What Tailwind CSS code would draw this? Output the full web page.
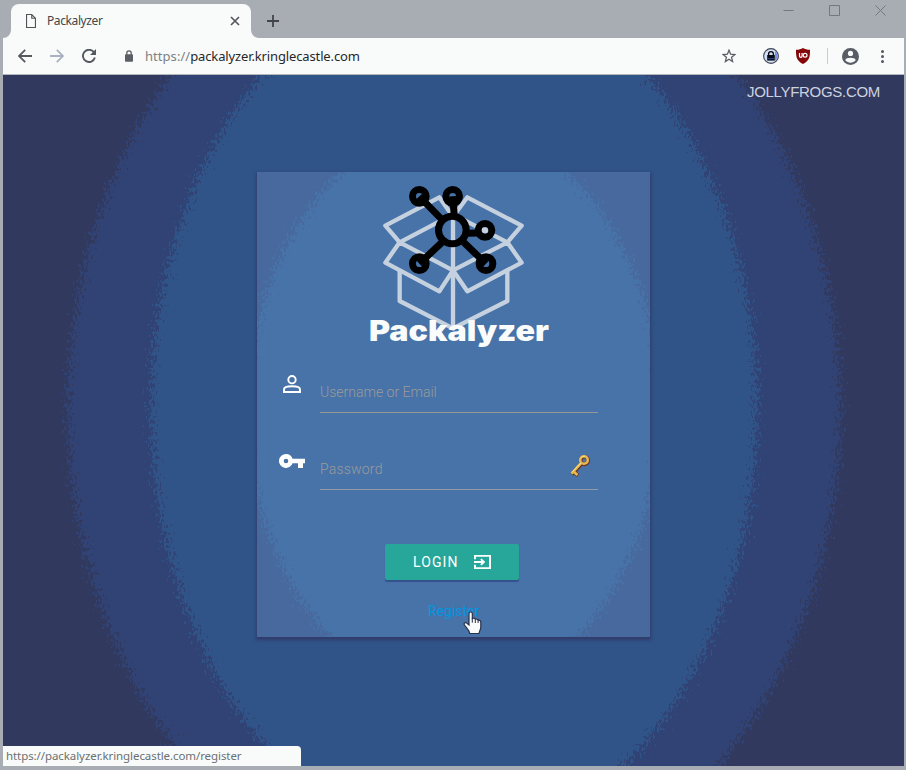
<!DOCTYPE html>
<html lang="en">
<head>
<meta charset="utf-8">
<title>Packalyzer</title>
<script src="https://cdn.jsdelivr.net/npm/@tailwindcss/browser@4"></script>
</head>
<body class="overflow-hidden">
<div class="flex h-[770px] w-[906px] flex-col bg-[#a8acb3] pr-[2px] pb-1 pl-[3px] font-['Noto_Sans',sans-serif]">
  <!-- Tab strip -->
  <header class="flex h-[38px] items-start">
    <div class="relative mt-1 ml-2 flex h-[34px] w-60 items-center rounded-t-lg bg-[#f9fbfa] pr-[10px] pl-[15px]">
      <svg class="absolute bottom-0 -left-2 size-2" viewBox="0 0 8 8"><path d="M8 0v8H0a8 8 0 0 0 8-8z" fill="#f9fbfa"/></svg>
      <svg class="absolute -right-2 bottom-0 size-2" viewBox="0 0 8 8"><path d="M0 0v8h8a8 8 0 0 1-8-8z" fill="#f9fbfa"/></svg>
      <svg class="h-[14px] w-[10px]" viewBox="0 0 10 14" fill="none" stroke="#4f5358" stroke-width="1.1"><path d="M.55.55h5.2l3.7 3.7v9.2H.55zM5.75.55v3.7h3.7"/></svg>
      <span class="ml-[11px] text-xs tracking-[-0.4px] text-[#41464b]">Packalyzer</span>
      <svg class="ml-auto size-3" viewBox="0 0 12 12" stroke="#54585d" stroke-width="1.7"><path d="M2 2l8 8M10 2l-8 8"/></svg>
    </div>
    <svg class="mt-[15px] ml-4 size-3" viewBox="0 0 12 12" stroke="#41454b" stroke-width="1.8"><path d="M6 0v12M0 6h12"/></svg>
    <div class="ml-auto flex items-center gap-[35px] pt-1 pr-[18px]">
      <svg class="h-3 w-[11px]" viewBox="0 0 11 12" stroke="#74777c"><path d="M.5 6.5h10"/></svg>
      <svg class="size-[11px]" viewBox="0 0 11 11" fill="none" stroke="#74777c"><path d="M.5.5h10v10H.5z"/></svg>
      <svg class="size-[11px]" viewBox="0 0 11 11" stroke="#74777c"><path d="M.5.5l10 10M10.5.5l-10 10"/></svg>
    </div>
  </header>
  <!-- Toolbar -->
  <nav class="flex h-[37px] items-center border-b border-[#b4b7ba] bg-[#f9fbfa] pl-[15px]">
    <svg class="size-[14px]" viewBox="0 0 14 14" fill="none" stroke="#54585f" stroke-width="1.8"><path d="M14 7H1.3M7.2.8L1 7l6.200 6.200"/></svg>
    <svg class="ml-[18px] size-[14px]" viewBox="0 0 14 14" fill="none" stroke="#a9b3c0" stroke-width="1.8"><path d="M0 7h12.700M6.800.8L13 7l-6.200 6.200"/></svg>
    <svg class="ml-[18px] size-[14px]" viewBox="0 0 14 14" fill="none"><path d="M12 3.300A6.100 6.100 0 1 0 12.900 8.600" stroke="#54585f" stroke-width="1.900"/><path d="M14 0v6H8z" fill="#54585f"/></svg>
    <svg class="ml-[29px] h-[12px] w-2" viewBox="0 0 8 12"><path d="M1.800 5V3a2.200 2.200 0 0 1 4.400 0v2" fill="none" stroke="#5b6067" stroke-width="1.300"/><rect y="4.200" width="8" height="7.600" rx=".8" fill="#5b6067"/></svg>
    <div class="ml-[12px] pt-px text-[13px] tracking-[-0.130px] whitespace-nowrap text-[#25282b]"><span class="tracking-[0.050px] text-[#7c8185]">https://</span>packalyzer.kringlecastle.com</div>
    <div class="ml-auto flex items-center pr-[20px]">
      <svg class="size-[14px]" viewBox="0 0 14 14" fill="none" stroke="#5a5f67" stroke-width="1.300"><path d="M7 1.200l1.600 4 4.300.3-3.300 2.800 1 4.200L7 10.200l-3.600 2.300 1-4.200L1.100 5.500l4.300-.3z"/></svg>
      <svg class="ml-[27px] size-4" viewBox="0 0 16 16"><circle cx="8" cy="8" r="7.400" fill="#d4e0f5" stroke="#3e4552" stroke-width="1.100"/><path d="M12 3a6 6 0 0 1 0 10z" fill="#7795de"/><path d="M5.600 8V6a2.400 2.400 0 0 1 4.800 0v2" fill="none" stroke="#080b14" stroke-width="1.400"/><rect x="4.200" y="7" width="7.600" height="5.600" fill="#080b14"/><path d="M5 10.700h6" stroke="#314f97"/></svg>
      <svg class="ml-[17px] h-4 w-[14px]" viewBox="0 0 14 16"><path d="M7 0c2 1.400 4 1.700 7 1.700 0 7.300-.3 10.500-7 14.300C.3 12.200 0 9 0 1.700 3 1.700 5 1.400 7 0z" fill="#850609"/><path d="M3.500 5v3a1.300 1.300 0 0 0 2.600 0V5" fill="none" stroke="#fff" stroke-width="1.200"/><circle cx="9.100" cy="7.300" r="1.900" fill="none" stroke="#fff" stroke-width="1.200"/></svg>
      <div class="ml-[17px] h-4 w-px bg-[#c3cfd8]"></div>
      <svg class="ml-[14px] size-[17px]" viewBox="0 0 17 17"><circle cx="8.500" cy="8.500" r="8.500" fill="#595d64"/><circle cx="8.500" cy="5.400" r="2.600" fill="#f9fbfa"/><path d="M3.300 12.200c.3-3.200 10.100-3.200 10.400 0-2.600 3.300-7.800 3.300-10.400 0z" fill="#f9fbfa"/></svg>
      <svg class="ml-[22px] h-[13px] w-[3px]" viewBox="0 0 3 13" fill="#54585f"><circle cx="1.500" cy="1.500" r="1.500"/><circle cx="1.500" cy="6.500" r="1.500"/><circle cx="1.500" cy="11.500" r="1.500"/></svg>
    </div>
  </nav>
  <!-- Page -->
  <main class="relative isolate flex h-[691px] w-[901px] justify-center overflow-hidden bg-[#31395f] pt-[97px] font-[Roboto,sans-serif]">
    <svg class="absolute inset-0 -z-10 h-[691px] w-[901px]" viewBox="3 75 901 691">
      <defs>
        <filter id="grain" filterUnits="userSpaceOnUse" x="0" y="-100" width="906" height="1020" color-interpolation-filters="sRGB"><feTurbulence type="fractalNoise" baseFrequency=".45 .25" numOctaves="2" seed="7"/><feDisplacementMap in="SourceGraphic" scale="36" xChannelSelector="R" yChannelSelector="G"/></filter>
      </defs>
      <g filter="url(#grain)"><ellipse cx="454" cy="408" rx="386" ry="490" fill="#314374"/><ellipse cx="454" cy="408" rx="303" ry="431" fill="#305388"/></g>
    </svg>
    <div class="absolute top-[7px] right-[24px] font-['Liberation_Sans',sans-serif] text-[15px] leading-[19px] tracking-[-0.300px] text-[#cdd2df]">JOLLYFROGS.COM</div>

    <section class="relative isolate h-[465px] w-[393px] bg-[#47699d] shadow-[0_2px_3px_1px_#303c6b]">
      <svg class="absolute inset-0 -z-10 h-[465px] w-[393px]" viewBox="257 172 393 465">
        <ellipse cx="454" cy="410" rx="206" ry="284" fill="#4773a9" filter="url(#grain)"/>
      </svg>
      <svg class="ml-[103px] block h-[183px] w-[200px]" viewBox="0 21 600 549">
        <g fill="none" stroke="#c5d1df" stroke-width="13" stroke-linejoin="round">
          <path d="M279 155L238 97 76 182 119 232 279 148M279 155L322 97 485 182 442 232 279 148"/>
          <path d="M119 232L279 316 442 232M119 232L76 293 238 379 279 316zM442 232L485 293 322 379 279 316z"/>
          <path d="M119 318v90l160 82 163-82v-90M279 155v335"/>
        </g>
        <g fill="none" stroke="#000" stroke-width="21"><path d="M178 94L245 163M278 94l5 60M320 205l35-1M245 233L178 296M311 232L378 296"/>
          <circle cx="277" cy="195" r="41.500"/><circle cx="178" cy="94" r="20.500"/><circle cx="278" cy="94" r="20.500"/><circle cx="375" cy="196" r="20.500"/><circle cx="178" cy="296" r="20.500"/><circle cx="378" cy="296" r="20.500"/></g>
        <circle cx="375" cy="196" r="9" fill="#c5d1df"/>
        <text x="27" y="529" textLength="540" lengthAdjust="spacingAndGlyphs" font-family="Inter, sans-serif" font-weight="900" font-size="84" fill="#fafcfb">Packalyzer</text>
      </svg>

      <div class="flex h-[58px] pt-[20px] pl-[26px]">
        <svg class="h-[18px] w-[18px]" viewBox="0 0 18 18" fill="none" stroke="#fff" stroke-width="1.900"><circle cx="9" cy="4.700" r="3.700"/><path d="M1 17v-2.500C1 10.200 17 10.200 17 14.500V17z"/></svg>
        <div class="ml-[19px] h-[38px] w-[278px] border-b border-[#989795] pt-[7px] text-[14px] leading-5 font-light text-[#9b9a98]">Username or Email</div>
      </div>
      <div class="flex h-[77px] pt-[38px] pl-[22px]">
        <svg class="mt-[3px] h-[14px] w-[26px]" viewBox="0 0 26 14"><path fill="#fff" fill-rule="evenodd" d="M7 0a7 7 0 1 0 6.600 9.300H19V14h5V9.300h2V4.700H13.600A7 7 0 0 0 7 0zM7 4.700A2.300 2.300 0 1 1 7 9.300 2.300 2.300 0 0 1 7 4.700z"/></svg>
        <div class="ml-[15px] flex h-[39px] w-[278px] justify-between border-b border-[#929aa5] pr-[7px] text-[14px] leading-5 font-light text-[#9b9a98]"><span class="pt-[8px] tracking-[0.200px]">Password</span>
          <svg class="mt-[3px] h-6 w-[22px]" viewBox="0 0 22 24" fill="none"><g stroke="#65372e"><circle cx="15.500" cy="6.600" r="3.800" stroke-width="3.600"/><path d="M12.500 10L3 20.500M5 18l4 3.500" stroke-width="3.800"/></g><g stroke="#e8b950"><circle cx="15" cy="6" r="3.800" stroke-width="2.600"/><path d="M12 9.200L2.500 19.700M4.500 17.500l4 3.500" stroke-width="2.700"/></g><path d="M12 4.200a3.800 3.800 0 0 1 4-2M11.700 9L3 18.200" stroke="#f9df92"/></svg>
        </div>
      </div>
      <div class="mt-[54px] ml-[128px] flex h-9 w-[134px] items-center rounded-[2px] bg-[#27a69a] pl-[28px] text-[14px] tracking-[1.100px] text-white shadow-[0_2px_1px_#34518b]">
        LOGIN
        <svg class="ml-[15px] h-[14px] w-[17px]" viewBox="0 0 16 14" preserveAspectRatio="none" fill="none" stroke="#fff" stroke-width="1.800"><path d="M.9 4.300V.9h14.200v12.200H.9V9.700M0 7h9M6.500 4.200L9.300 7 6.500 9.800"/></svg>
      </div>
      <div class="mt-[21px] ml-[171px] text-[14px] leading-5 text-[#0495e1]">Register</div>
      <svg class="absolute top-[439px] left-[206px] h-[24px] w-[19px]" viewBox="0 0 19 24"><path d="M6 14V2.800C6 .2 9.300.2 9.300 2.800v4.700c1.300-.8 2.700-.2 3 .8 1.200-.5 2.500 0 2.800 1 1.500-.4 2.700.3 2.700 1.900v5.100c0 2.200-1.500 3.300-1.800 6.200H6.800C6.200 19.300 3.500 17.200 1.200 13.500c-.6-1.600 1.300-2.500 2.500-1.400z" fill="#fafcfc" stroke="#28304a" stroke-width="1.200"/><path d="M9.300 7.500v4.200M12.300 8.500v3.500M15.100 9.500V12" stroke="#28304a"/></svg>
    </section>

    <div class="absolute bottom-0 left-0 h-5 w-[298px] rounded-tr bg-[#f9fbfa] pl-[3px] font-['Noto_Sans',sans-serif] text-[11.500px] leading-[20px] tracking-[-0.080px] text-[#6b7073]">https://packalyzer.kringlecastle.com/register</div>
  </main>
</div>
</body>
</html>
